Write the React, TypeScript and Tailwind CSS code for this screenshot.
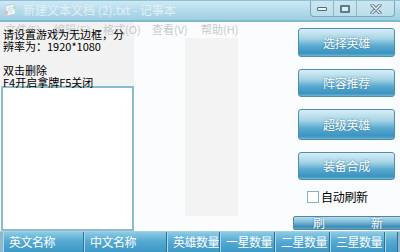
import React from "react";

const BUTTONS = [
  { label: "选择英雄", top: "mt-[6px]", h: "h-[29px]" },
  { label: "阵容推荐", top: "mt-[12px]", h: "h-[28px]" },
  { label: "超级英雄", top: "mt-[12px]", h: "h-[31px]" },
  { label: "装备合成", top: "mt-[12px]", h: "h-[28px]" },
];

const COLUMNS = [
  { label: "英文名称", w: "w-[81px]" },
  { label: "中文名称", w: "w-[83px]" },
  { label: "英雄数量", w: "w-[53px]" },
  { label: "一星数量", w: "w-[55px]" },
  { label: "二星数量", w: "w-[55px]" },
  { label: "三星数量", w: "w-[55px]" },
  { label: "", w: "w-[13px]" },
];

const MENU = ["文件(F)", "编辑(E)", "格式(O)", "查看(V)", "帮助(H)"];

function NotepadIcon() {
  return (
    <svg width="15" height="14" viewBox="0 0 15 14">
      <rect x="3" y="2" width="9" height="10" fill="#eef6fa" stroke="#b9d3df" transform="rotate(-12 7 7)" />
      <path d="M5 5h5M5 7h5M5 9h4" stroke="#c9dbe4" strokeWidth="1" transform="rotate(-12 7 7)" />
      <rect x="1" y="8" width="4" height="3" fill="#e7b9c4" />
      <rect x="10" y="3" width="3" height="3" fill="#b9e0c2" />
    </svg>
  );
}

function WindowControls() {
  return (
    <div className="flex h-[16px] rounded-b-[4px] border border-t-0 border-[#7aa9bd] bg-[#c9e4ef]/60">
      <div className="flex w-[23px] items-center justify-center border-r border-[#8fb7c8]">
        <div className="h-[4px] w-[10px] rounded-[1px] border border-[#4d6c7a] bg-[#e8f2f6]" />
      </div>
      <div className="flex w-[23px] items-center justify-center border-r border-[#8fb7c8]">
        <div className="h-[8px] w-[10px] rounded-[1px] border-[2px] border-[#5d7b88] bg-[#dfeef4]" />
      </div>
      <div className="flex w-[37px] items-center justify-center">
        <svg width="12" height="10" viewBox="0 0 12 10">
          <path d="M2 1l8 8M10 1l-8 8" stroke="#5d7b88" strokeWidth="3.2" strokeLinecap="round" />
          <path d="M2 1l8 8M10 1l-8 8" stroke="#eef5f8" strokeWidth="1.4" strokeLinecap="round" />
        </svg>
      </div>
    </div>
  );
}

function BlueButton({ label, className }: { label: string; className: string }) {
  return (
    <div
      className={`ml-[5px] flex w-[97px] items-center justify-center rounded-[3px] border border-[#4f8fae] bg-[linear-gradient(#d6edf5_0%,#a9d5e6_35%,#5aaad0_62%,#3b93c0_90%,#6db6d6_100%)] text-[12px] tracking-[-0.3px] text-white [text-shadow:0_0_2px_#2d6f90] ${className}`}
    >
      {label}
    </div>
  );
}

export default function App() {
  return (
    <div className="flex h-[252px] w-[400px] flex-col overflow-hidden bg-[#fbfcfd] font-['Noto_Sans_CJK_SC',sans-serif]">
      {/* title bar of the window behind */}
      <div className="flex h-[20px] shrink-0 items-start justify-between border-t border-[#8fc0d4] bg-[linear-gradient(#cfe9f4,#afd9ea_60%,#9fcfe2)] pl-[3px]">
        <div className="flex items-center gap-[5px] pt-[2px]">
          <NotepadIcon />
          <span className="text-[12px] leading-[14px] text-[#e2eff5]">新建文本文档 (2).txt - 记事本</span>
        </div>
        <div className="mr-[5px]">
          <WindowControls />
        </div>
      </div>
      <div className="h-[2px] shrink-0 bg-[#7fb8cf]" />

      <div className="relative flex min-h-0 flex-1">
        {/* faded menu of the window behind */}
        <div className="absolute left-[5px] top-[1px] flex gap-[13px] text-[11px] leading-[12px] text-[#c6cbce]">
          {MENU.map((m) => (
            <span key={m} className="w-[36px] whitespace-nowrap">
              {m}
            </span>
          ))}
        </div>

        {/* left column */}
        <div className="flex w-[134px] shrink-0 flex-col">
          <div className="h-[64px] bg-[#f2f2f2] pl-[3px] pt-[6px] text-[11px] leading-[12px] text-black">
            <div className="relative">
              <p className="whitespace-nowrap">请设置游戏为无边框，分</p>
              <p className="whitespace-nowrap">辨率为：1920*1080</p>
              <p>&nbsp;</p>
              <p className="whitespace-nowrap">双击删除</p>
              <p className="whitespace-nowrap">F4开启拿牌F5关闭</p>
            </div>
          </div>
          <div className="ml-[1px] flex-1 border-[2px] border-[#8bbbcf] bg-white" />
        </div>

        {/* middle */}
        <div className="w-[159px] shrink-0 pl-[51px] pt-[16px]">
          <div className="h-[178px] w-[53px] bg-[#f3f3f3]" />
        </div>

        {/* right column */}
        <div className="flex flex-1 flex-col">
          {BUTTONS.map((b) => (
            <BlueButton key={b.label} label={b.label} className={`${b.top} ${b.h}`} />
          ))}
          <div className="ml-[14px] mt-[10px] flex items-center gap-[2px]">
            <div className="h-[12px] w-[12px] border border-[#7fb2cb] bg-white" />
            <span className="text-[12px] leading-[14px] tracking-[-0.3px] text-black">自动刷新</span>
          </div>
          <div className="mt-[12px] flex h-[14px] w-[110px] items-center justify-between rounded-[2px] border border-[#4e88a6] bg-[linear-gradient(#b9dcea,#7ab8d4_45%,#3e8db6_80%,#5ca6c9)] pl-[19px] pr-[19px] text-[12px] leading-[12px] text-white [text-shadow:0_0_2px_#2d6f90]">
            <span>刷</span>
            <span>新</span>
          </div>
        </div>
      </div>

      {/* table header */}
      <div className="flex h-[21px] shrink-0 border-t border-[#a9cfdf] bg-[#8fb9cb] pl-[3px]">
        {COLUMNS.map((c, i) => (
          <div
            key={i}
            className={`${c.w} flex items-center overflow-hidden whitespace-nowrap border-r border-[#2f6f92] bg-[linear-gradient(#8ccbe6,#56aad3_45%,#3d97c5)] pl-[6px] text-[12px] tracking-[-0.5px] text-white [box-shadow:inset_1px_0_0_#a8d8ec]`}
          >
            {c.label}
          </div>
        ))}
      </div>
    </div>
  );
}
